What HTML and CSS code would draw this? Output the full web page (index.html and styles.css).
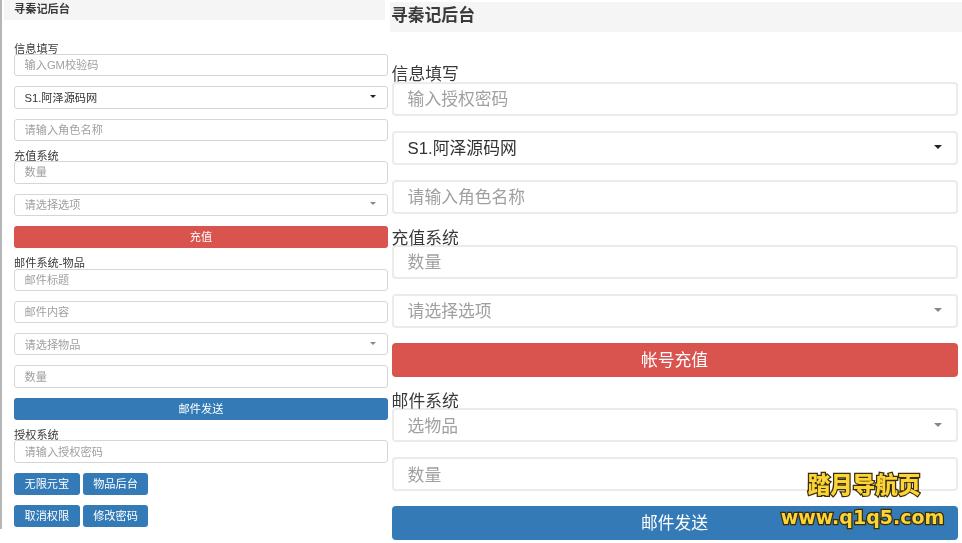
FILE: index.html
```html
<!DOCTYPE html>
<html lang="zh-CN">
<head>
  <meta charset="UTF-8">
  <meta name="viewport" content="width=device-width, initial-scale=1.0">
  <title>寻秦记后台</title>
  <link rel="stylesheet" href="styles.css">
</head>
<body>

  <div class="page">

    <!-- Small copy of the panel -->
    <div class="panel panel-small">
      <div class="panel-title">寻秦记后台</div>
      <div class="panel-body">
        <div class="group-label">信息填写</div>
        <input class="field" type="text" placeholder="输入GM校验码">
        <div class="field picker"><span>S1.阿泽源码网</span><i class="caret caret-dark"></i></div>
        <input class="field" type="text" placeholder="请输入角色名称">

        <div class="group-label">充值系统</div>
        <input class="field" type="text" placeholder="数量">
        <div class="field picker empty"><span>请选择选项</span><i class="caret"></i></div>
        <button class="btn btn-red" type="button">充值</button>

        <div class="group-label">邮件系统-物品</div>
        <input class="field" type="text" placeholder="邮件标题">
        <input class="field" type="text" placeholder="邮件内容">
        <div class="field picker empty"><span>请选择物品</span><i class="caret"></i></div>
        <input class="field" type="text" placeholder="数量">
        <button class="btn btn-blue" type="button">邮件发送</button>

        <div class="group-label">授权系统</div>
        <input class="field" type="text" placeholder="请输入授权密码">
        <div class="btn-row">
          <button class="btn btn-blue" type="button">无限元宝</button>
          <button class="btn btn-blue" type="button">物品后台</button>
        </div>
        <div class="btn-row">
          <button class="btn btn-blue" type="button">取消权限</button>
          <button class="btn btn-blue" type="button">修改密码</button>
        </div>
      </div>
    </div>

    <!-- Large copy of the panel -->
    <div class="panel panel-large">
      <div class="panel-title">寻秦记后台</div>
      <div class="panel-body">
        <div class="group-label">信息填写</div>
        <input class="field" type="text" placeholder="输入授权密码">
        <div class="field picker"><span>S1.阿泽源码网</span><i class="caret caret-dark"></i></div>
        <input class="field" type="text" placeholder="请输入角色名称">

        <div class="group-label">充值系统</div>
        <input class="field" type="text" placeholder="数量">
        <div class="field picker empty"><span>请选择选项</span><i class="caret"></i></div>
        <button class="btn btn-red" type="button">帐号充值</button>

        <div class="group-label">邮件系统</div>
        <div class="field picker empty"><span>选物品</span><i class="caret"></i></div>
        <input class="field" type="text" placeholder="数量">
        <button class="btn btn-blue" type="button">邮件发送</button>
      </div>
    </div>

  </div>

  <!-- Watermark over the corner -->
  <div class="watermark">
    <div class="watermark-name">踏月导航页</div>
    <div class="watermark-url">www.q1q5.com</div>
  </div>

</body>
</html>
```

FILE: styles.css
```css
* {
  box-sizing: border-box;
}

body {
  margin: 0;
  width: 962px;
  height: 543px;
  overflow: hidden;
  position: relative;
  background-color: #fff;
  font-family: "Liberation Sans", "Noto Sans CJK SC", sans-serif;
  color: #3a3a3a;
}

.page {
  display: flex;
  align-items: flex-start;
  filter: blur(0.45px);
}

.panel-title {
  background-color: #f5f5f5;
  font-weight: bold;
}

.field {
  display: flex;
  align-items: center;
  width: 100%;
  background-color: #fff;
  border: 1px solid #d6d6d6;
  color: #333;
  font-family: inherit;
  outline: none;
}

.field::placeholder {
  color: #a0a0a0;
}

.picker {
  justify-content: space-between;
}

.picker.empty {
  color: #a0a0a0;
}

.caret {
  display: block;
  width: 0;
  height: 0;
  border-style: solid;
  border-color: #888 transparent transparent;
}

.caret-dark {
  border-top-color: #222;
}

.btn {
  display: block;
  border: 0;
  color: #fff;
  font-family: inherit;
  padding: 0 0 2px;
}

.btn-red {
  width: 100%;
  background-color: #d9534f;
}

.btn-blue {
  width: 100%;
  background-color: #337ab7;
}

.btn-row {
  display: flex;
}

/* Small copy */
.panel-small {
  width: 390px;
  height: 529px;
  flex: none;
  border-left: 2px solid #b5b5b5;
  font-size: 11.2px;
}

.panel-small .panel-title {
  height: 20px;
  line-height: 18px;
  margin: 0 5px 0 2px;
  padding-left: 10px;
}

.panel-small .panel-body {
  padding: 23.6px 2px 0 12px;
}

.panel-small .group-label {
  height: 10.4px;
  line-height: 10.4px;
}

.panel-small .field,
.panel-small .btn {
  height: 22.3px;
  margin-bottom: 10px;
  border-radius: 3px;
  font-size: 11.2px;
}

.panel-small .field {
  padding: 0 10px 0 9.5px;
}

.panel-small .picker {
  padding-bottom: 1.5px;
}

.panel-small .caret {
  border-width: 3px 3px 0;
  margin-right: 1px;
}

.panel-small .btn-row {
  gap: 3px;
}

.panel-small .btn-row .btn {
  width: 65.7px;
}

/* Large copy */
.panel-large {
  width: 572px;
  flex: none;
  font-size: 16.8px;
}

.panel-large .panel-title {
  height: 30px;
  line-height: 27px;
  margin-top: 2px;
  padding-left: 1px;
}

.panel-large .panel-body {
  width: 566px;
  padding: 33.4px 0 0;
  margin-left: 1.6px;
}

.panel-large .group-label {
  height: 16.3px;
  line-height: 19px;
}

.panel-large .field,
.panel-large .btn {
  height: 34px;
  margin-bottom: 15px;
  border-radius: 4px;
  font-size: 16.8px;
}

.panel-large .field {
  border: 2px solid #ebebeb;
  padding: 3px 14px 0 14px;
}

.panel-large .picker {
  padding-top: 0;
  padding-bottom: 1px;
}

.panel-large .caret {
  border-width: 4.5px 4.5px 0;
}

/* Watermark */
.watermark {
  position: absolute;
  top: 467px;
  left: 772px;
  width: 184px;
  color: #fbd537;
  text-align: center;
  font-weight: bold;
  paint-order: stroke fill;
  -webkit-text-stroke: 2.5px #3b2c0a;
  filter: blur(0.3px);
}

.watermark-name {
  font-family: "Noto Sans CJK SC", sans-serif;
  font-size: 22.5px;
  font-weight: 900;
  line-height: 33px;
}

.watermark-url {
  font-family: "DejaVu Sans", sans-serif;
  font-size: 19px;
  line-height: 24px;
  margin-top: 5px;
  margin-left: -3px;
}
```
